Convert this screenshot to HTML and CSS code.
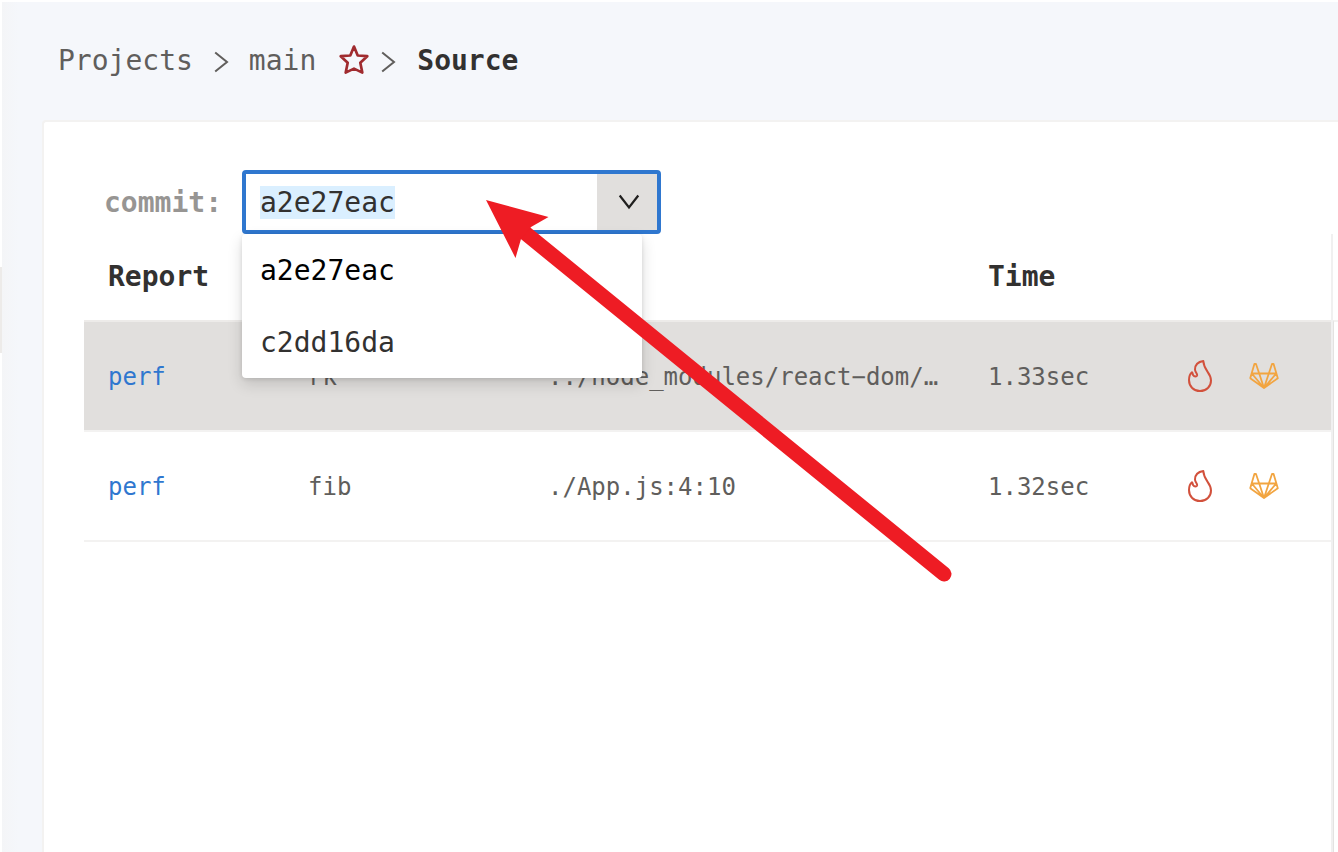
FILE: index.html
```html
<!DOCTYPE html>
<html lang="en">
<head>
<meta charset="utf-8">
<title>Source</title>
<link rel="stylesheet" href="styles.css">
</head>
<body>
<svg class="defs" width="0" height="0">
  <symbol id="flame" viewBox="0 0 24 32"><path d="M15.3 1C10.2 1.8 7.1 4.8 7 9.4C7 12 9.4 13.4 9.1 15.2C8.7 16.9 6.2 16.8 5.2 15.2C4.4 14 4.8 12.8 4 12.2C2.2 13.600 1 16.600 1 20C1 26.500 5.800 31 12 31C18.400 31 23 26.400 23 20.400C23 12.400 16 11.200 15.300 1Z" fill="none" stroke="#d2513c" stroke-width="2" stroke-linejoin="round"/></symbol>
  <symbol id="fox" viewBox="0 0 30 28"><path d="M1.200 16.200L5.400 2H7L10.200 11.500L15 26L19.800 11.500L23 2H24.600L28.800 16.200L15 26L1.200 16.200L2.800 11.500H27.200L15 26L2.800 11.500" fill="none" stroke="#f2a541" stroke-width="1.800" stroke-linejoin="round"/></symbol>
</svg>
<div class="app">
  <aside class="rail"><div class="rail-handle"></div></aside>
  <main class="main">
    <nav class="crumbs">
      <span class="crumb">Projects</span>
      <svg class="sep" width="15" height="22" viewBox="0 0 15 22"><path d="M1.2 1.5L13 11L1.2 20.5" /></svg>
      <span class="crumb">main</span>
      <svg class="star" width="32" height="32" viewBox="0 0 32 32"><path d="M16 2.600L19.700 11.500L29.300 12.200L22.300 18.800L24.300 28.600L16 24.600L7.700 28.600L9.700 18.800L2.700 12.200L12.300 11.500Z"/></svg>
      <svg class="sep" width="15" height="22" viewBox="0 0 15 22"><path d="M1.2 1.5L13 11L1.2 20.5" /></svg>
      <span class="crumb current">Source</span>
    </nav>
    <section class="card">
      <div class="filter">
        <span class="label">commit:</span>
        <div class="combo">
          <div class="field"><span class="selected">a2e27eac</span></div>
          <div class="caret"><svg width="22" height="16" viewBox="0 0 22 16"><path d="M1.7 1.5L11 13.500L20.3 1.5"/></svg></div>
          <div class="menu">
            <div class="option active">a2e27eac</div>
            <div class="option">c2dd16da</div>
          </div>
        </div>
      </div>
      <div class="grid">
        <div class="table">
          <div class="row head"><span>Report</span><span></span><span></span><span>Time</span></div>
          <div class="row hover"><span class="link">perf</span><span>rk</span><span class="path">../node_modules/react−dom/…</span><span>1.33sec</span><svg class="flame"><use href="#flame"/></svg><svg class="fox"><use href="#fox"/></svg></div>
          <div class="row"><span class="link">perf</span><span>fib</span><span class="path">./App.js:4:10</span><span>1.32sec</span><svg class="flame"><use href="#flame"/></svg><svg class="fox"><use href="#fox"/></svg></div>
        </div>
        <div class="gutter"></div>
      </div>
    </section>
  </main>
</div>
<svg class="arrow" width="1338" height="852" viewBox="0 0 1338 852"><path class="shaft" d="M524 232L944 574"/><path class="tip" d="M486 200L548.500 217L531 227L521 239L515.500 258Z"/></svg>
</body>
</html>
```
FILE: styles.css
```css
* { box-sizing: border-box; }
body { margin: 0; background: #fff; font-family: "DejaVu Sans Mono", monospace; color: #323130; overflow: hidden; }
.defs { position: absolute; }
.app { display: flex; height: 852px; padding-top: 2px; }
.rail { width: 2px; flex: none; padding-top: 265px; }
.rail-handle { height: 86px; background: #edebe9; }
.main { flex: 1; display: flex; flex-direction: column; padding-left: 40px; background: linear-gradient(90deg, #f4f5f7, #f5f7fb 17px); }
.crumbs { display: flex; align-items: center; height: 118px; padding: 0 0 2px 16px; font-size: 28px; color: #605e5c; }
.crumbs .sep { margin: 3px 20px 0 21px; }
.crumbs .star { margin-left: 22px; }
.crumbs .star + .sep { margin: 3px 21px 0 11px; }
.sep path { fill: none; stroke: #605e5c; stroke-width: 2; }
.star path { fill: none; stroke: #a02b2f; stroke-width: 2.7; stroke-linejoin: round; }
.current { font-weight: 700; color: #323130; }
.card { flex: 1; background: #fff; border: 2px solid #f3f2f1; border-right: 0; border-bottom: 0; border-radius: 4px 0 0; padding: 48px 0 0 40px; }
.filter { display: flex; align-items: center; height: 64px; padding-left: 20px; font-size: 28px; }
.label { font-weight: 700; color: #979593; width: 138px; }
.combo { position: relative; display: flex; width: 419px; height: 64px; border: 4px solid #2f77cf; border-radius: 4px; background: #fff; }
.field { flex: 1; display: flex; align-items: center; padding-left: 14px; }
.selected { background: #daefff; }
.caret { width: 60px; background: #e1dfdd; display: flex; align-items: center; justify-content: center; padding-left: 3px; }
.caret path { fill: none; stroke: #201f1e; stroke-width: 2.2; }
.menu { position: absolute; z-index: 2; left: -4px; top: 60px; width: 400px; height: 144px; background: #fff; border-radius: 4px; box-shadow: 0 6px 15px rgba(0,0,0,.14), 0 1px 4px rgba(0,0,0,.11); }
.option { display: flex; align-items: center; height: 72px; padding-left: 18px; }
.option.active { color: #000; }
.grid { display: flex; height: 618px; }
.table { flex: none; width: 1249px; border-right: 2px solid #f0f0f0; }
.gutter { flex: 1; margin-top: 86px; border-top: 2px solid #f3f2f1; border-left: 1px solid #e3e2e1; }
.row { display: grid; grid-template-columns: 200px 240px 440px 199px 62px 1fr; align-items: center; height: 110px; padding: 2px 0 0 24px; border-bottom: 2px solid #f3f2f1; font-size: 24px; color: #605e5c; }
.head { height: 88px; font-size: 28px; font-weight: 700; color: #323130; padding-top: 0; padding-bottom: 2px; border-color: #edebe9; }
.hover { background: #e1dfdd; }
.link { color: #2f77cf; }
.path { white-space: nowrap; }
.flame { width: 26px; height: 32px; margin-top: -2px; }
.fox { width: 30px; height: 28px; margin-top: -2px; }
.arrow { position: absolute; z-index: 5; left: 0; top: 0; pointer-events: none; }
.shaft { fill: none; stroke: #ee1c24; stroke-width: 15; stroke-linecap: round; }
.tip { fill: #ee1c24; }
```
